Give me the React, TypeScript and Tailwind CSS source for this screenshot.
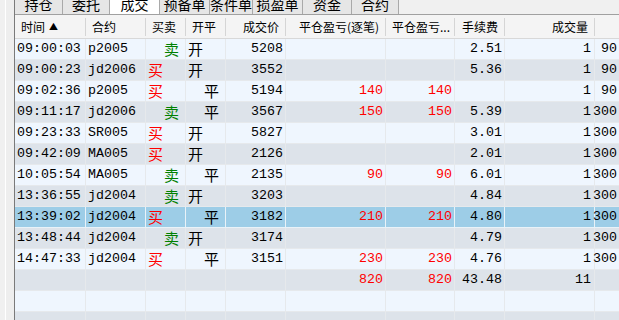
import React from "react";

interface Trade {
  time: string;
  code: string;
  side: "买" | "卖" | "";
  oc: "开" | "平" | "";
  price: string;
  pnl1: string;
  pnl2: string;
  fee: string;
  qty: string;
  extra: string;
}

const trades: Trade[] = [
  {time: "09:00:03", code: "p2005", side: "卖", oc: "开", price: "5208", pnl1: "", pnl2: "", fee: "2.51", qty: "1", extra: "90"},
  {time: "09:00:23", code: "jd2006", side: "买", oc: "开", price: "3552", pnl1: "", pnl2: "", fee: "5.36", qty: "1", extra: "90"},
  {time: "09:02:36", code: "p2005", side: "买", oc: "平", price: "5194", pnl1: "140", pnl2: "140", fee: "", qty: "1", extra: "90"},
  {time: "09:11:17", code: "jd2006", side: "卖", oc: "平", price: "3567", pnl1: "150", pnl2: "150", fee: "5.39", qty: "1", extra: "300"},
  {time: "09:23:33", code: "SR005", side: "买", oc: "开", price: "5827", pnl1: "", pnl2: "", fee: "3.01", qty: "1", extra: "300"},
  {time: "09:42:09", code: "MA005", side: "买", oc: "开", price: "2126", pnl1: "", pnl2: "", fee: "2.01", qty: "1", extra: "300"},
  {time: "10:05:54", code: "MA005", side: "卖", oc: "平", price: "2135", pnl1: "90", pnl2: "90", fee: "6.01", qty: "1", extra: "300"},
  {time: "13:36:55", code: "jd2004", side: "卖", oc: "开", price: "3203", pnl1: "", pnl2: "", fee: "4.84", qty: "1", extra: "300"},
  {time: "13:39:02", code: "jd2004", side: "买", oc: "平", price: "3182", pnl1: "210", pnl2: "210", fee: "4.80", qty: "1", extra: "300"},
  {time: "13:48:44", code: "jd2004", side: "卖", oc: "开", price: "3174", pnl1: "", pnl2: "", fee: "4.79", qty: "1", extra: "300"},
  {time: "14:47:33", code: "jd2004", side: "买", oc: "平", price: "3151", pnl1: "230", pnl2: "230", fee: "4.76", qty: "1", extra: "300"},
  {time: "", code: "", side: "", oc: "", price: "", pnl1: "820", pnl2: "820", fee: "43.48", qty: "11", extra: ""},
  {time: "", code: "", side: "", oc: "", price: "", pnl1: "", pnl2: "", fee: "", qty: "", extra: ""},
  {time: "", code: "", side: "", oc: "", price: "", pnl1: "", pnl2: "", fee: "", qty: "", extra: ""},
];

const tabs = [
  {label: "持仓", w: "w-[48px]"},
  {label: "委托", w: "w-[47px]"},
  {label: "成交", w: "w-[50px]"},
  {label: "预备单", w: "w-[50px]"},
  {label: "条件单", w: "w-[43px]"},
  {label: "损盈单", w: "w-[50px]"},
  {label: "资金", w: "w-[49px]"},
  {label: "合约", w: "w-[47px]"},
];

const cjk = "font-['Noto_Sans_CJK_SC',sans-serif]";
const mono = "font-['Liberation_Mono','Noto_Sans_CJK_SC',monospace]";
const SELECTED = 8;

export default function App() {
  return (
    <div className="w-[619px] h-[320px] bg-[#f0f0f0] flex overflow-hidden">
      {/* left gutter */}
      <div className="flex shrink-0 h-full">
        <div className="w-[5px] bg-[#f0f0f0]"/>
        <div className="w-[1px] bg-white"/>
        <div className="w-[8px] bg-[#eeeeee]"/>
        <div className="w-[1px] bg-[#7a7a7a]"/>
      </div>

      <div className="flex flex-col flex-1 min-w-0">
        {/* tab strip */}
        <div className="flex h-[14px] shrink-0 bg-[#f0f0f0]">
          {tabs.map((t, i) => (
            <div
              key={t.label}
              className={`${t.w} h-[14px] overflow-hidden border-r border-[#a9a9a9] flex justify-center ${i === 2 ? "bg-white" : "bg-[#e6e6e6]"}`}
            >
              <span className={`${cjk} text-[14px] leading-[14px] -mt-[3px] text-black`}>{t.label}</span>
            </div>
          ))}
        </div>
        <div className="h-[1px] bg-[#a0a0a0] shrink-0"/>

        {/* header */}
        <div className={`flex h-[24px] shrink-0 bg-[#f4f4f4] border-b border-[#d8d8d8] text-[12px] text-black ${cjk}`}>
          <HeadCell w="w-[71px]" align="left">时间 <span className="text-[9px] ml-[4px]">▲</span></HeadCell>
          <HeadCell w="w-[60px]" align="left">合约</HeadCell>
          <HeadCell w="w-[40px]" align="left">买卖</HeadCell>
          <HeadCell w="w-[40px]" align="left">开平</HeadCell>
          <HeadCell w="w-[60px]" align="right">成交价</HeadCell>
          <HeadCell w="w-[100px]" align="right">平仓盈亏(逐笔)</HeadCell>
          <HeadCell w="w-[69px]" align="left">平仓盈亏...</HeadCell>
          <HeadCell w="w-[50px]" align="right">手续费</HeadCell>
          <HeadCell w="w-[90px]" align="right">成交量</HeadCell>
          <div className="flex-1"/>
        </div>

        {/* body */}
        <div className={`flex flex-col ${mono} text-[13.3px] text-black`}>
          {trades.map((r, i) => {
            const bg = i === SELECTED ? "bg-[#9dcde7]" : i % 2 === 0 ? "bg-[#eff6fe]" : "bg-[#dde3ea]";
            const line = i === SELECTED ? "border-[#e9f2f8]" : "border-[#e6e9ec]";
            return (
              <div key={i} className={`flex h-[21px] shrink-0 border-b ${line} ${bg}`}>
                <Cell w="w-[71px]" line={line}>{r.time}</Cell>
                <Cell w="w-[60px]" line={line}>{r.code}</Cell>
                <Cell w="w-[40px]" line={line}>
                  {r.side && (
                    <span className={`${cjk} text-[15px] ${r.side === "买" ? "text-[#ff0000] ml-0" : "text-[#008000] ml-[16px]"}`}>{r.side}</span>
                  )}
                </Cell>
                <Cell w="w-[40px]" line={line}>
                  {r.oc && (
                    <span className={`${cjk} text-[15px] ${r.oc === "平" ? "ml-[16px]" : ""}`}>{r.oc}</span>
                  )}
                </Cell>
                <Cell w="w-[60px]" line={line} right>{r.price}</Cell>
                <Cell w="w-[100px]" line={line} right red>{r.pnl1}</Cell>
                <Cell w="w-[69px]" line={line} right red>{r.pnl2}</Cell>
                <Cell w="w-[50px]" line={line} right>{r.fee}</Cell>
                <Cell w="w-[90px]" line={line} right pad="pr-[3px]">{r.qty}</Cell>
                <div className={`flex-1 flex items-center overflow-hidden whitespace-nowrap ${r.extra === "90" ? "pl-[6px]" : "-ml-[2px]"}`}>
                  {r.extra}
                </div>
              </div>
            );
          })}
        </div>
      </div>
    </div>
  );
}

function HeadCell({w, align, children}: {w: string; align: "left" | "right"; children: React.ReactNode}) {
  return (
    <div className={`${w} shrink-0 flex items-center relative whitespace-nowrap overflow-hidden ${align === "left" ? "justify-start pl-[6px]" : "justify-end pr-[7px]"}`}>
      {children}
      <div className="absolute right-0 top-[3px] bottom-[2px] w-[1px] bg-[#d5d5d5]"/>
    </div>
  );
}

function Cell({w, line, right, red, pad, children}: {
  w: string;
  line: string;
  right?: boolean;
  red?: boolean;
  pad?: string;
  children?: React.ReactNode;
}) {
  return (
    <div
      className={`${w} shrink-0 border-r ${line} flex items-center whitespace-nowrap overflow-hidden ${right ? `justify-end ${pad ?? "pr-[2px]"}` : "pl-[2px]"} ${red ? "text-[#ff0000]" : ""}`}
    >
      {children}
    </div>
  );
}
